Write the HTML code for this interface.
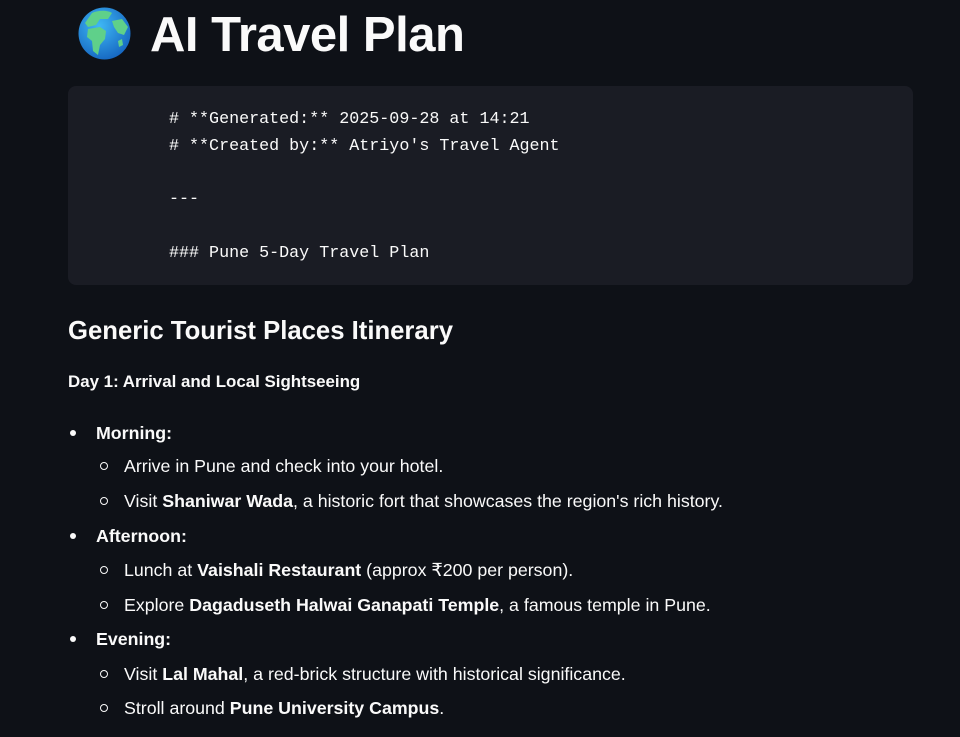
<!DOCTYPE html>
<html><head><style>
body{margin:0;background:#0e1117;color:#fafafa;font-family:"Liberation Sans",sans-serif;width:960px;height:737px;overflow:hidden;position:relative}
.t{position:absolute;white-space:nowrap}
h1{position:absolute;left:150px;top:5px;margin:0;font-size:49px;font-weight:bold;letter-spacing:-0.5px;line-height:60px}
.code{position:absolute;left:68px;top:86px;width:845px;height:199px;background:#1a1c24;border-radius:8px}
.code div{position:absolute;left:101px;font-family:"Liberation Mono",monospace;font-size:16.7px;line-height:20px;color:#fafafa}
.h2{left:68px;top:313px;font-size:25.7px;font-weight:bold;line-height:36px}
.p{font-size:17.8px;line-height:20px}
.dot{position:absolute;width:6px;height:6px;border-radius:50%;background:#fafafa}
.circ{position:absolute;border-radius:50%;border:1.3px solid #fafafa;box-sizing:border-box;width:8px;height:8px}
</style></head><body>
<svg style="position:absolute;left:78px;top:7px" width="53" height="53" viewBox="0 0 53 53">
<defs><radialGradient id="g" cx="40%" cy="35%" r="70%"><stop offset="0" stop-color="#3fb8f5"/><stop offset="1" stop-color="#1565c0"/></radialGradient></defs>
<circle cx="26.5" cy="26.5" r="26" fill="url(#g)"/>
<path d="M14 6 C20 3 30 3 34 6 L30 12 L22 12 L18 18 L10 20 L7 16 Z" fill="#5fd08a"/>
<path d="M10 22 L22 20 L28 24 L27 32 L22 38 L20 48 L15 44 L14 34 L9 30 Z" fill="#5fd08a"/>
<path d="M34 14 L44 12 L50 20 L46 28 L40 26 L36 20 Z" fill="#5fd08a"/>
<path d="M40 34 L44 32 L45 38 L41 40 Z" fill="#5fd08a"/>
</svg>
<h1>AI Travel Plan</h1>
<div class="code">
<div style="top:24px"># **Generated:** 2025-09-28 at 14:21</div>
<div style="top:51px"># **Created by:** Atriyo's Travel Agent</div>
<div style="top:104px">---</div>
<div style="top:158px">### Pune 5-Day Travel Plan</div>
</div>
<div class="t h2">Generic Tourist Places Itinerary</div>
<div class="t p" style="left:68px;top:372px;font-size:16.9px"><b>Day 1: Arrival and Local Sightseeing</b></div>

<div class="dot" style="left:70px;top:430px"></div><div class="t p" style="left:96px;top:423px"><b>Morning:</b></div>
<div class="circ" style="left:100px;top:462px"></div><div class="t p" style="left:124px;top:456px">Arrive in Pune and check into your hotel.</div>
<div class="circ" style="left:100px;top:497px"></div><div class="t p" style="left:124px;top:491px">Visit <b>Shaniwar Wada</b>, a historic fort that showcases the region's rich history.</div>

<div class="dot" style="left:70px;top:533px"></div><div class="t p" style="left:96px;top:526px"><b>Afternoon:</b></div>
<div class="circ" style="left:100px;top:566px"></div><div class="t p" style="left:124px;top:560px">Lunch at <b>Vaishali Restaurant</b> (approx ₹200 per person).</div>
<div class="circ" style="left:100px;top:601px"></div><div class="t p" style="left:124px;top:595px">Explore <b>Dagaduseth Halwai Ganapati Temple</b>, a famous temple in Pune.</div>

<div class="dot" style="left:70px;top:636px"></div><div class="t p" style="left:96px;top:629px"><b>Evening:</b></div>
<div class="circ" style="left:100px;top:670px"></div><div class="t p" style="left:124px;top:664px">Visit <b>Lal Mahal</b>, a red-brick structure with historical significance.</div>
<div class="circ" style="left:100px;top:704px"></div><div class="t p" style="left:124px;top:698px">Stroll around <b>Pune University Campus</b>.</div>
</body></html>
